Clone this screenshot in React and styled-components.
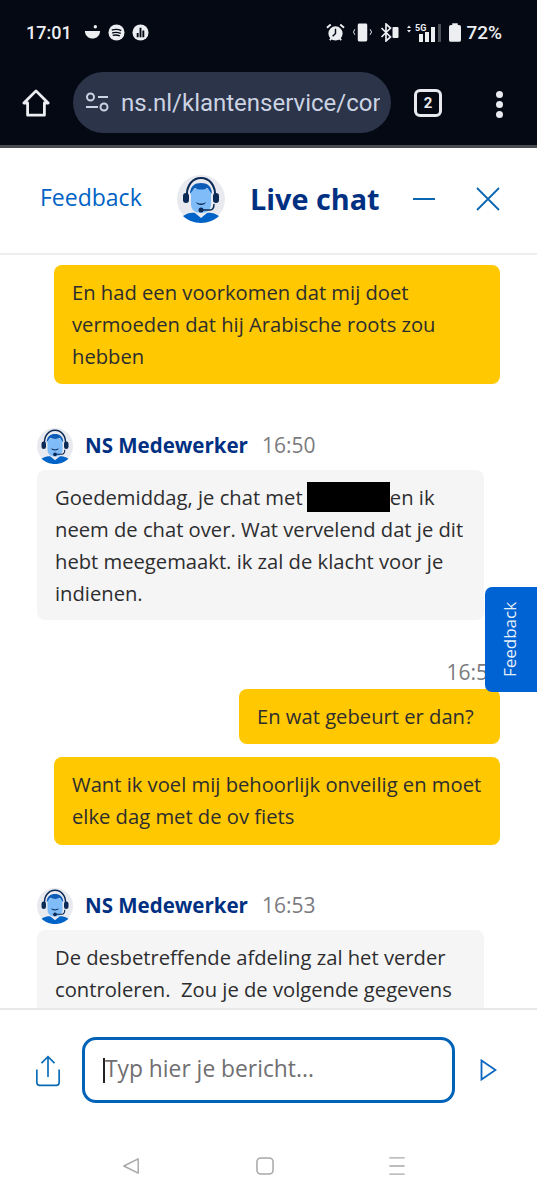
import React from 'react';
import styled, { createGlobalStyle } from 'styled-components';

const Global = createGlobalStyle`
  html, body {
    margin: 0;
    padding: 0;
    background: #fff;
    overflow: hidden;
  }
  * {
    box-sizing: border-box;
  }
`;

const Phone = styled.div`
  width: 537px;
  height: 1200px;
  display: flex;
  flex-direction: column;
  font-family: 'Open Sans', 'Noto Sans', sans-serif;
  overflow: hidden;
`;

const Dark = styled.div`
  height: 148px;
  flex: none;
  background: #050913;
  border-bottom: 3px solid #4a4c52;
`;

const StatusBar = styled.div`
  height: 64px;
  padding: 0 35px 0 26px;
  display: flex;
  align-items: center;
  color: #eceef2;
  font-family: 'Roboto', sans-serif;
  font-size: 18px;
  font-weight: 500;
`;

const LeftIcons = styled.div`
  display: flex;
  align-items: center;
  gap: 7px;
  margin-left: 12px;
`;

const RightIcons = styled.div`
  display: flex;
  align-items: center;
  gap: 8px;
  margin-left: auto;
`;

const Percent = styled.span`
  font-size: 19px;
  margin-left: -3px;
`;

const Toolbar = styled.div`
  height: 81px;
  display: flex;
  align-items: flex-start;
  padding: 8px 0 0 22px;
`;

const HomeIcon = styled.svg`
  margin-top: 17px;
`;

const UrlPill = styled.div`
  width: 318px;
  height: 61px;
  margin-left: 23px;
  padding: 0 11px 0 12px;
  border-radius: 31px;
  background: #2b3449;
  display: flex;
  align-items: center;
  gap: 12px;
`;

const UrlText = styled.span`
  flex: 1;
  overflow: hidden;
  white-space: nowrap;
  color: #ccd3e2;
  font-family: 'Roboto', sans-serif;
  font-size: 24px;
`;

const TabCount = styled.div`
  width: 28px;
  height: 28px;
  margin: 17px 0 0 23px;
  border: 3px solid #e8eaf0;
  border-radius: 6px;
  display: flex;
  align-items: center;
  justify-content: center;
  color: #e8eaf0;
  font-family: 'Roboto', sans-serif;
  font-size: 15px;
  font-weight: 700;
`;

const MenuDots = styled.div`
  margin: 19px 0 0 54px;
  display: flex;
  flex-direction: column;
  gap: 3px;
  i {
    width: 7px;
    height: 7px;
    border-radius: 50%;
    background: #e8eaf0;
  }
`;

const Header = styled.header`
  height: 107px;
  flex: none;
  display: flex;
  align-items: center;
  padding: 0 37px 4px 40px;
  border-bottom: 2px solid #eceef0;
`;

const FeedbackLink = styled.span`
  color: #0063c4;
  font-size: 23px;
  width: 137px;
  padding-bottom: 3px;
`;

const Title = styled.h1`
  margin: 0 0 0 25px;
  color: #003082;
  font-size: 28.800px;
  font-weight: 700;
  flex: 1;
`;

const HeaderActions = styled.div`
  display: flex;
  align-items: center;
  gap: 41px;
`;

const ChatArea = styled.main`
  position: relative;
  height: 753px;
  flex: none;
  overflow: hidden;
  padding: 10px 37px 0;
`;

const Bubble = styled.div`
  font-size: 20.200px;
  line-height: 32px;
  color: #2d2d2f;
  border-radius: 8px;
`;

const Outgoing = styled(Bubble)`
  width: ${(props) => props.$width || 446}px;
  margin-bottom: ${(props) => props.$after || 13}px;
  padding: 11px 16px ${(props) => props.$bottom || 12}px 18px;
  background: #ffc800;
  align-self: flex-end;
`;

const Incoming = styled(Bubble)`
  width: 447px;
  padding: 11px 14px 11px 18px;
  background: #f5f5f5;
`;

const OutgoingColumn = styled.div`
  display: flex;
  flex-direction: column;
`;

const AgentRow = styled.div`
  display: flex;
  align-items: center;
  margin: 30px 0 5px;
  height: 38px;
`;

const AgentName = styled.span`
  margin-left: 12px;
  padding-bottom: 2px;
  color: #003082;
  font-size: 20.500px;
  font-weight: 700;
`;

const Time = styled.span`
  margin-left: 14px;
  padding-bottom: 2px;
  color: #7b7b7f;
  font-size: 21px;
`;

const OutTime = styled(Time)`
  display: block;
  margin: 40px 0 5px;
  padding: 0;
  line-height: 24px;
  text-align: right;
`;

const Redacted = styled.span`
  display: inline-block;
  width: 83px;
  height: 30px;
  margin-left: -1px;
  background: #000;
  vertical-align: -7px;
`;

const FeedbackTab = styled.div`
  position: absolute;
  right: 0;
  top: 332px;
  width: 52px;
  height: 105px;
  padding-right: 3px;
  border-radius: 7px 0 0 7px;
  background: #0063d3;
  color: #e6f0fb;
  font-size: 17px;
  display: flex;
  align-items: center;
  justify-content: center;
  span {
    transform: rotate(-90deg);
  }
`;

const Composer = styled.footer`
  height: 92px;
  flex: none;
  border-top: 2px solid #e8e8ea;
  padding: 27px 0 0 35px;
  display: flex;
  align-items: flex-start;
`;

const ShareIcon = styled.svg`
  margin-top: 17px;
`;

const InputBox = styled.div`
  width: 373px;
  height: 66px;
  margin-left: 21px;
  padding-left: 18px;
  border: 3.500px solid #0063b8;
  border-radius: 14px;
  display: flex;
  align-items: center;
`;

const Caret = styled.i`
  width: 2px;
  height: 25px;
  background: #222;
`;

const Placeholder = styled.span`
  margin: -3px 0 0 0;
  color: #6f6f72;
  font-size: 22.800px;
`;

const SendButton = styled.div`
  margin: 22px 0 0 25px;
`;

const NavBar = styled.nav`
  height: 199px;
  flex: none;
  padding: 57px 0 0 122px;
  display: flex;
  align-items: flex-start;
`;

const NavIcon = styled.svg`
  margin-left: ${(props) => props.$left || 0}px;
`;

const Avatar = ({ size }) => (
  <svg width={size} height={size} viewBox="0 0 48 48">
    <circle cx="24" cy="24" r="24" fill="#e8eaef" />
    <path d="M14 14h20v15c0 6-4 9-10 9s-10-3-10-9z" fill="#80bdf8" />
    <path d="M13 19c0-8 5-11 11-11s11 3 11 11c-2-2-3-5-5-6-2 2-9 2-12 0-2 1-3 4-5 6z" fill="#0d5cb8" />
    <path d="M10 22C9 10 16 3 24 3s15 7 14 19" fill="none" stroke="#0b2a55" strokeWidth="2" />
    <rect x="6" y="18" width="6" height="10" rx="3" fill="#0b2a55" />
    <rect x="36" y="18" width="6" height="10" rx="3" fill="#0b2a55" />
    <path d="M19 27c3 2 7 2 10 0-1 4-9 4-10 0z" fill="#0b2a55" />
    <path d="M37 29c0 5-2 6-4 6h-9" fill="none" stroke="#0b2a55" strokeWidth="1.500" />
    <circle cx="24" cy="35" r="2.500" fill="#0b2a55" />
    <path d="M6 41c4-3 9-4 12-3l6 5 6-5c3-1 8 0 12 3-4 4-11 7-18 7S10 45 6 41z" fill="#0063c8" />
  </svg>
);

const StatusIcons = () => (
  <>
    <LeftIcons>
      <svg width="17" height="16" viewBox="0 0 18 16" fill="#eceef2">
        <path d="M1 7h16c0 5-4 8-8 8s-8-3-8-8z" />
        <circle cx="12" cy="2.500" r="1.800" />
      </svg>
      <svg width="17" height="17" viewBox="0 0 18 18">
        <circle cx="9" cy="9" r="8.500" fill="#eceef2" />
        <path d="M4 6.500c3-1 7-1 10 .5M4.500 9.500c3-1 6-.7 9 .5M5 12c2.500-.7 5-.5 7.500.5" stroke="#050913" strokeWidth="1.500" fill="none" />
      </svg>
      <svg width="17" height="17" viewBox="0 0 18 18">
        <circle cx="9" cy="9" r="8.500" fill="#eceef2" />
        <path d="M5 9.500h2V14H5zM8 4h2v10H8zM11 7h2v7h-2z" fill="#050913" />
      </svg>
    </LeftIcons>
    <RightIcons>
      <svg width="19" height="19" viewBox="0 0 20 20">
        <circle cx="10" cy="11" r="7.500" fill="#eceef2" />
        <path d="M10 6v5l-3 3" stroke="#050913" strokeWidth="1.500" fill="none" />
        <path d="M1 5l4-3.500M19 5l-4-3.500M4 18l2-2M16 18l-2-2" stroke="#eceef2" strokeWidth="2" />
      </svg>
      <svg width="19" height="19" viewBox="0 0 20 19" fill="none">
        <rect x="5" y="0" width="10" height="19" rx="1.500" fill="#eceef2" />
        <path d="M2 6l-1.500 3L2 12M18 6l1.500 3-1.500 3" stroke="#eceef2" />
      </svg>
      <svg width="19" height="19" viewBox="0 0 18 19" fill="none">
        <path d="M1 5l9 9-4.500 4V1L10 5 1 14" stroke="#eceef2" strokeWidth="1.700" />
        <rect x="12" y="4" width="6" height="11" rx="1" fill="#eceef2" />
      </svg>
      <svg width="34" height="19" viewBox="0 0 34 19" fill="#eceef2">
        <path d="M0 5l2-2.500L4 5zM0 7l2 2.500L4 7z" />
        <text x="8" y="8" fontSize="9" fontWeight="700" fontFamily="Roboto, sans-serif">5G</text>
        <rect x="12" y="11" width="4" height="8" />
        <rect x="18" y="9" width="4" height="10" />
        <rect x="24" y="4" width="4" height="15" />
        <rect x="31" y="1" width="3" height="18" fill="#4b4e55" />
      </svg>
      <svg width="12" height="19" viewBox="0 0 13 20" fill="#eceef2">
        <rect x="0" y="2" width="13" height="18" rx="2" />
        <rect x="3.500" y="0" width="6" height="3" />
      </svg>
      <Percent>72%</Percent>
    </RightIcons>
  </>
);

const App = () => (
  <Phone>
    <Global />
    <Dark>
      <StatusBar>
        17:01
        <StatusIcons />
      </StatusBar>
      <Toolbar>
        <HomeIcon width="28" height="28" viewBox="0 0 30 30" fill="none" stroke="#eceef2" strokeWidth="3" strokeLinejoin="round">
          <path d="M2 15L15 2l13 13h-4v13H6V15z" />
        </HomeIcon>
        <UrlPill>
          <svg width="24" height="24" viewBox="0 0 24 24" fill="none" stroke="#ccd3e2" strokeWidth="2">
            <circle cx="5.500" cy="6" r="3.500" />
            <path d="M13 6h10M1 16h12" />
            <circle cx="19" cy="16" r="3.500" />
          </svg>
          <UrlText>ns.nl/klantenservice/contact</UrlText>
        </UrlPill>
        <TabCount>2</TabCount>
        <MenuDots>
          <i />
          <i />
          <i />
        </MenuDots>
      </Toolbar>
    </Dark>

    <Header>
      <FeedbackLink>Feedback</FeedbackLink>
      <Avatar size={48} />
      <Title>Live chat</Title>
      <HeaderActions>
        <svg width="22" height="2" viewBox="0 0 22 2">
          <rect width="22" height="2" fill="#0b66b0" />
        </svg>
        <svg width="24" height="24" viewBox="0 0 24 24" stroke="#0b66b0" strokeWidth="1.800">
          <path d="M1 1l22 22M23 1L1 23" />
        </svg>
      </HeaderActions>
    </Header>

    <ChatArea>
      <OutgoingColumn>
        <Outgoing>En had een voorkomen dat mij doet vermoeden dat hij Arabische roots zou hebben</Outgoing>
      </OutgoingColumn>

      <AgentRow>
        <Avatar size={36} />
        <AgentName>NS Medewerker</AgentName>
        <Time>16:50</Time>
      </AgentRow>
      <Incoming>
        Goedemiddag, je chat met <Redacted />en ik neem de chat over. Wat vervelend dat je dit hebt meegemaakt. ik zal de klacht voor je indienen.
      </Incoming>

      <OutgoingColumn>
        <OutTime>16:53</OutTime>
        <Outgoing $width={261}>En wat gebeurt er dan?</Outgoing>
        <Outgoing $bottom={13} $after={12}>Want ik voel mij behoorlijk onveilig en moet elke dag met de ov fiets</Outgoing>
      </OutgoingColumn>

      <AgentRow>
        <Avatar size={36} />
        <AgentName>NS Medewerker</AgentName>
        <Time>16:53</Time>
      </AgentRow>
      <Incoming>
        De desbetreffende afdeling zal het verder controleren.&nbsp; Zou je de volgende gegevens willen doorgeven?
      </Incoming>

      <FeedbackTab>
        <span>Feedback</span>
      </FeedbackTab>
    </ChatArea>

    <Composer>
      <ShareIcon width="26" height="33" viewBox="0 0 28 34" fill="none" stroke="#0b6cb5" strokeWidth="1.800">
        <path d="M14 24V2M7 9l7-7 7 7" />
        <path d="M2 16v14a3 3 0 0 0 3 3h18a3 3 0 0 0 3-3V16" />
      </ShareIcon>
      <InputBox>
        <Caret />
        <Placeholder>Typ hier je bericht...</Placeholder>
      </InputBox>
      <SendButton>
        <svg width="17" height="22" viewBox="0 0 17 22" fill="none" stroke="#0b66c0" strokeWidth="1.800">
          <path d="M1.500 1.500L15.500 11 1.500 20.500z" />
        </svg>
      </SendButton>
    </Composer>

    <NavBar>
      <NavIcon width="18" height="18" viewBox="0 0 20 20" fill="none" stroke="#a8a8aa" strokeWidth="1.600" strokeLinejoin="round">
        <path d="M18 2v16L2 10z" />
      </NavIcon>
      <NavIcon $left={116} width="18" height="18" viewBox="0 0 19 19" fill="none" stroke="#a8a8aa" strokeWidth="1.600">
        <rect x="1" y="1" width="17" height="17" rx="4" />
      </NavIcon>
      <NavIcon $left={114} width="18" height="18" viewBox="0 0 19 20" stroke="#a8a8aa" strokeWidth="1.600">
        <path d="M1 1h17M1 10h17M1 19h17" />
      </NavIcon>
    </NavBar>
  </Phone>
);

export default App;
